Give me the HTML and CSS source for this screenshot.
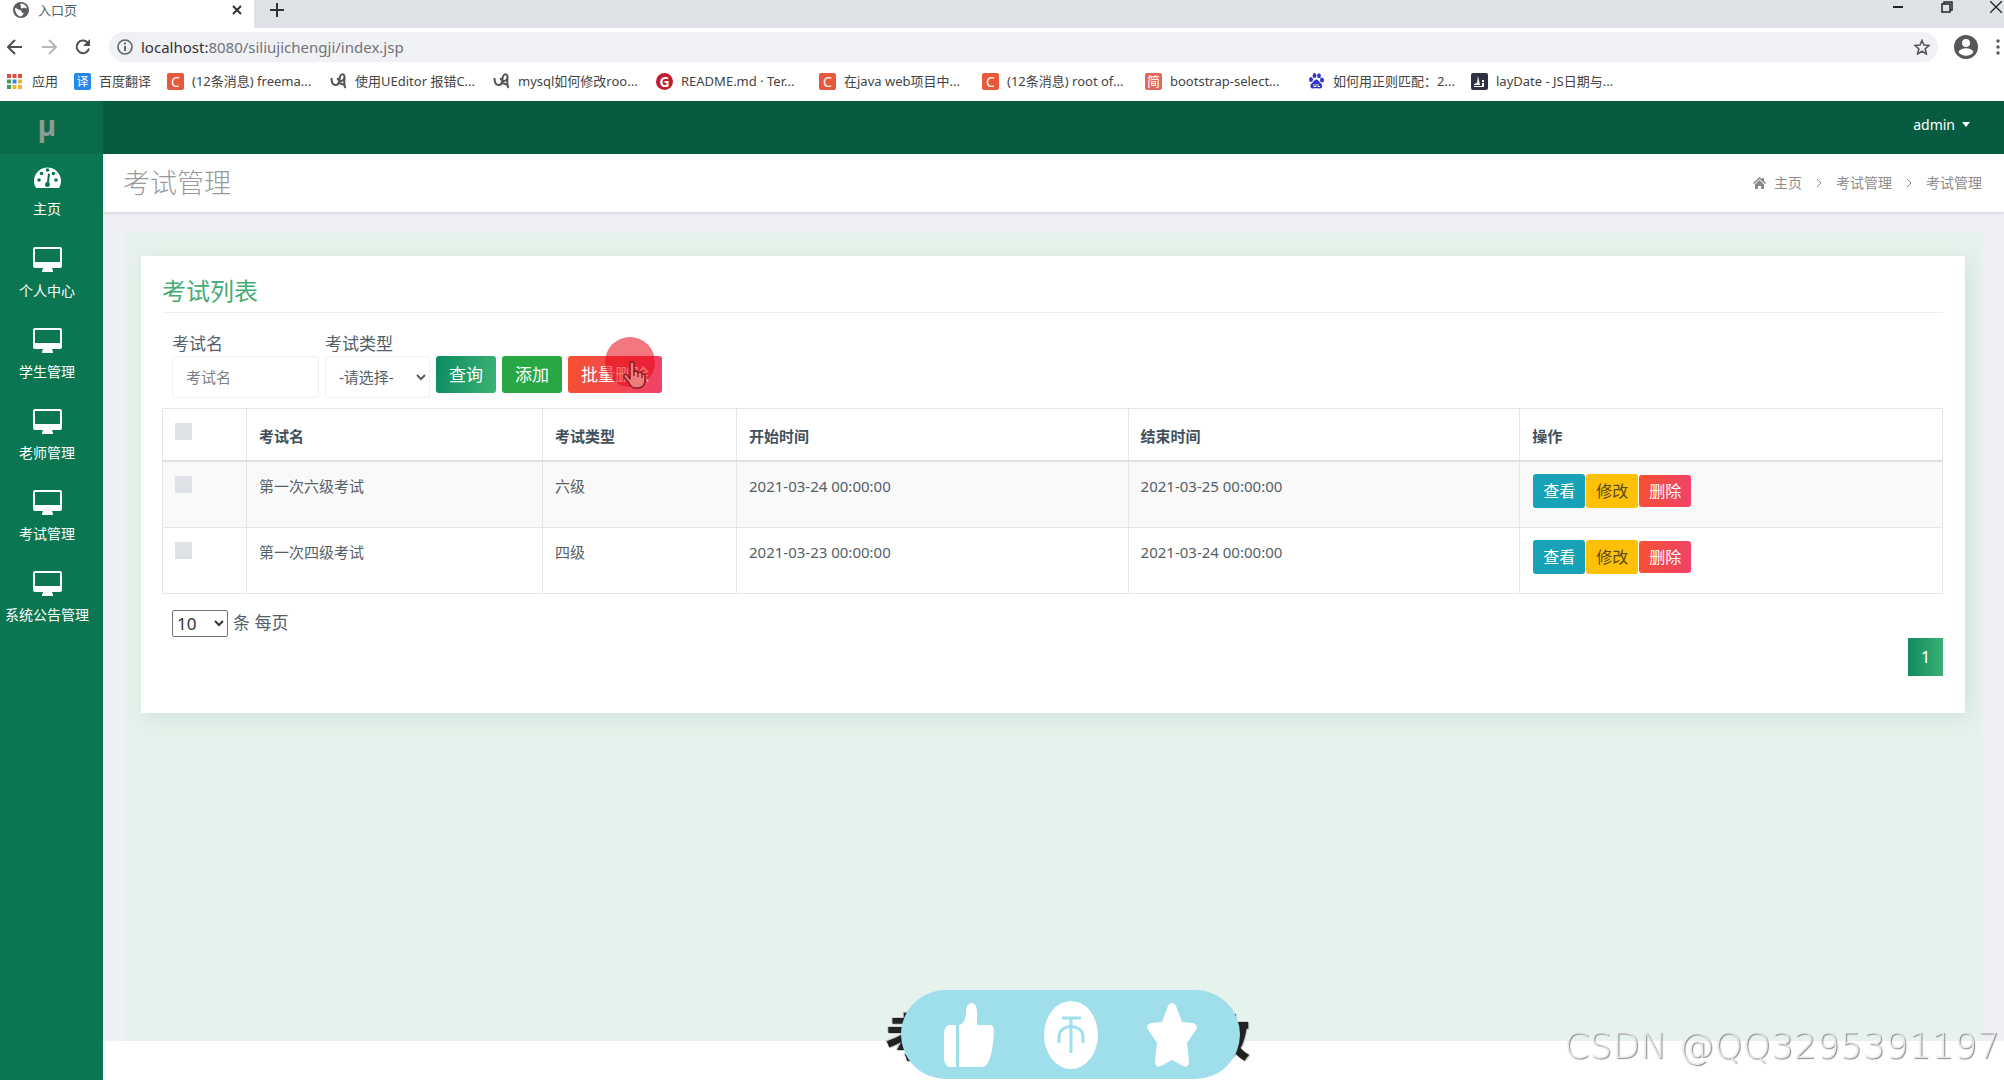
FILE: index.html
```html
<!DOCTYPE html>
<html lang="zh-CN">
<head>
<meta charset="utf-8">
<title>入口页</title>
<link rel="stylesheet" href="styles.css">
</head>
<body>
<svg class="defs" aria-hidden="true">
  <symbol id="monitor" viewBox="0 0 29 25"><path fill-rule="evenodd" d="M2 0h25a2 2 0 0 1 2 2v17a2 2 0 0 1-2 2h-8l1 3v1H9v-1l1-3H2a2 2 0 0 1-2-2V2a2 2 0 0 1 2-2zm0 2v13h25V2z"/></symbol>
  <symbol id="swirl" viewBox="0 0 16 16"><path fill="none" stroke="#555" stroke-width="2" d="M1 5c0 9 7 9 8 2 0-7 5-7 5-3 0 5-6 5-7 1M14 4c0 5-1 8 1 11M9 10l5 2"/></symbol>
</svg>

<header class="browser">
  <div class="tabs">
    <div class="tab">
      <svg width="16" height="16" viewBox="0 0 16 16"><circle cx="8" cy="8" r="8" fill="#5a5d61"/><path fill="#fff" d="M2 6c2 0 3 2 5 2s1 3 3 3-1 3-2 3.500C4 14 2 10 2 6zm5-4c3-1 6 1 7 4-2 1-3-1-4 0S7 6 8 4z"/></svg>
      <span class="tab-title">入口页</span>
      <button class="plain" aria-label="关闭标签"><svg width="10" height="10" viewBox="0 0 10 10"><path stroke="#333" stroke-width="2" d="M1 1l8 8M9 1L1 9"/></svg></button>
    </div>
    <button class="plain new-tab" aria-label="新标签"><svg width="14" height="14" viewBox="0 0 14 14"><path stroke="#333" stroke-width="2" d="M7 0v14M0 7h14"/></svg></button>
    <div class="window-buttons">
      <button class="plain" aria-label="最小化"><svg width="12" height="12" viewBox="0 0 12 12"><path stroke="#222" stroke-width="2" d="M1 6h10"/></svg></button>
      <button class="plain" aria-label="还原"><svg width="12" height="12" viewBox="0 0 12 12"><path fill="none" stroke="#222" stroke-width="1.500" d="M1 3h8v8H1zM3 3V1h8v8H9"/></svg></button>
      <button class="plain" aria-label="关闭"><svg width="12" height="12" viewBox="0 0 12 12"><path stroke="#222" stroke-width="1.300" d="M0 0l12 12M12 0L0 12"/></svg></button>
    </div>
  </div>
  <div class="toolbar">
    <button class="plain" aria-label="后退"><svg width="16" height="16" viewBox="0 0 16 16"><path fill="none" stroke="#4c4f53" stroke-width="2" d="M15 8H2M8 1L1 8l7 7"/></svg></button>
    <button class="plain" aria-label="前进"><svg width="16" height="16" viewBox="0 0 16 16"><path fill="none" stroke="#b5b7ba" stroke-width="2" d="M1 8h13M8 1l7 7-7 7"/></svg></button>
    <button class="plain" aria-label="刷新"><svg width="16" height="16" viewBox="0 0 16 16"><path fill="none" stroke="#4c4f53" stroke-width="2" d="M14 9.500A6.300 6.300 0 1 1 12.500 3.500L14 5"/><path fill="#4c4f53" d="M15 0v7H8z"/></svg></button>
    <div class="address">
      <svg width="16" height="16" viewBox="0 0 16 16"><circle cx="8" cy="8" r="7" fill="none" stroke="#5f6368" stroke-width="1.600"/><path stroke="#5f6368" stroke-width="2" d="M8 3.500v2M8 7v5"/></svg>
      <span class="url"><b>localhost:</b>8080/siliujichengji/index.jsp</span>
      <button class="plain" aria-label="收藏"><svg width="16" height="16" viewBox="0 0 16 16"><path fill="none" stroke="#555" stroke-width="1.600" d="M8 1.500l2 4.500 5 .5-3.800 3.200L12.300 15 8 12.200 3.700 15l1.100-5.300L1 6.500 6 6z"/></svg></button>
    </div>
    <button class="plain" aria-label="账户"><svg width="24" height="24" viewBox="0 0 24 24"><circle cx="12" cy="12" r="12" fill="#55575b"/><circle cx="12" cy="8" r="4" fill="#fff"/><path fill="#fff" d="M4.500 17c2-5 13-5 15 0-3 5-12 5-15 0z"/></svg></button>
    <button class="plain" aria-label="菜单"><svg width="4" height="16" viewBox="0 0 4 16"><g fill="#555"><circle cx="2" cy="2" r="1.700"/><circle cx="2" cy="8" r="1.700"/><circle cx="2" cy="14" r="1.700"/></g></svg></button>
  </div>
  <nav class="bookmarks">
    <a class="apps" href="#"><svg width="15" height="15" viewBox="0 0 15 15"><g fill="#d9503f"><path d="M0 0h4v4H0zM5.500 0h4v4h-4zM11 0h4v4h-4z"/></g><path fill="#3f9b58" d="M0 5.500h4v4H0z"/><path fill="#3f7fe0" d="M5.500 5.500h4v4h-4z"/><path fill="#e9b52d" d="M11 5.500h4v4h-4zM5.500 11h4v4h-4zM11 11h4v4h-4z"/><path fill="#3f9b58" d="M0 11h4v4H0z"/></svg>应用</a>
    <a class="translate" href="#"><span class="fav blue">译</span>百度翻译</a>
    <a href="#"><span class="fav orange">C</span>(12条消息) freema...</a>
    <a href="#"><svg width="17" height="16"><use href="#swirl"/></svg>使用UEditor 报错C...</a>
    <a href="#"><svg width="17" height="16"><use href="#swirl"/></svg>mysql如何修改roo...</a>
    <a href="#"><span class="fav round">G</span>README.md · Ter...</a>
    <a href="#"><span class="fav orange">C</span>在java web项目中...</a>
    <a href="#"><span class="fav orange">C</span>(12条消息) root of...</a>
    <a href="#"><span class="fav jian">简</span>bootstrap-select...</a>
    <a href="#"><svg width="17" height="16" viewBox="0 0 17 16"><g fill="#3337c9"><ellipse cx="3" cy="6.500" rx="2" ry="2.500"/><ellipse cx="6.500" cy="2.600" rx="1.900" ry="2.500"/><ellipse cx="11" cy="2.800" rx="1.900" ry="2.500"/><ellipse cx="14" cy="7" rx="2" ry="2.500"/><path d="M8.500 6.500c2 0 2.500 2.500 4.500 4s1.500 5-1 5-5-.5-7 0-4-3-1.500-5 3-4 5-4z"/></g><path stroke="#fff" d="M6 11v2.500h2V11M10 11v2.500h2"/></svg>如何用正则匹配：2...</a>
    <a href="#"><svg width="17" height="17" viewBox="0 0 17 17"><rect width="17" height="17" rx="2" fill="#2d3140"/><path fill="#fff" d="M7 3l2 9H3v-1l3-1zM11 7h2v2h-2zM11 10h2v4H3v-1h8z"/></svg>layDate - JS日期与...</a>
  </nav>
</header>

<div class="app">
  <aside class="sidebar">
    <a class="logo" href="#">µ</a>
    <nav class="menu">
      <a href="#"><svg width="27" height="25" viewBox="0 0 27 25"><path d="M2 23a13.500 13.500 0 1 1 23 0z"/><g fill="#0b7652"><circle cx="5" cy="15" r="1.800"/><circle cx="7.500" cy="8.500" r="1.800"/><circle cx="13.500" cy="5" r="1.800"/><circle cx="19.500" cy="8.500" r="1.800"/><circle cx="22" cy="15" r="1.800"/><path d="M14 8.500l2 .5-1 8.500a2.500 2.500 0 1 1-2-.5z"/></g></svg>主页</a>
      <a href="#"><svg width="29" height="25"><use href="#monitor"/></svg>个人中心</a>
      <a href="#"><svg width="29" height="25"><use href="#monitor"/></svg>学生管理</a>
      <a href="#"><svg width="29" height="25"><use href="#monitor"/></svg>老师管理</a>
      <a href="#"><svg width="29" height="25"><use href="#monitor"/></svg>考试管理</a>
      <a href="#"><svg width="29" height="25"><use href="#monitor"/></svg>系统公告管理</a>
    </nav>
  </aside>
  <div class="content">
    <div class="topbar"><button class="plain user">admin<span class="caret"></span></button></div>
    <div class="page-head">
      <h1>考试管理</h1>
      <nav class="crumbs">
        <a href="#"><svg width="13" height="12" viewBox="0 0 13 12"><path fill="#888" d="M6.500 0L9 2.300V1h2v3l2 2-1 1-5.500-5L1 7 0 6zM6.500 3L11 7.500V12H8V9H5v3H2V7.500z"/></svg>主页</a>
        <svg width="6" height="8" viewBox="0 0 6 8"><path fill="none" stroke="#888" d="M1 0l4 4-4 4"/></svg>
        <a href="#">考试管理</a>
        <svg width="6" height="8" viewBox="0 0 6 8"><path fill="none" stroke="#888" d="M1 0l4 4-4 4"/></svg>
        <span>考试管理</span>
      </nav>
    </div>
    <main class="stage">
      <section class="card">
        <h2>考试列表</h2>
        <form class="filters">
          <div class="field"><label for="name">考试名</label><input id="name" type="text" placeholder="考试名"></div>
          <div class="field"><label for="type">考试类型</label><select id="type"><option>-请选择-</option></select></div>
          <div class="actions">
            <button class="btn search" type="button">查询</button>
            <button class="btn add" type="button">添加</button>
            <span class="pointer-host">
              <button class="btn danger" type="button">批量删除</button>
              <span class="click-mark"></span>
              <svg class="hand" width="24" height="28" viewBox="0 0 24 28"><path fill="#ef7c7c" stroke="#8d1a22" stroke-width="1.500" stroke-linejoin="round" d="M8 18V3c0-3 4-3 4 0v8c1-2 4-1 4 1 1-2 4-1 4 1 1-1 3 0 3 2v5c0 4-3 7-7 7h-3c-3 0-5-3-6-5l-5-6c-1-3 2-4 4-1z"/><path stroke="#8d1a22" stroke-width="1.300" d="M12 10v5M16 12v4M20 13v4"/></svg>
            </span>
          </div>
        </form>
        <table>
          <colgroup><col class="c-check"><col class="c-name"><col class="c-type"><col class="c-time"><col class="c-time"><col></colgroup>
          <thead>
            <tr><th><input type="checkbox" aria-label="全选"></th><th>考试名</th><th>考试类型</th><th>开始时间</th><th>结束时间</th><th>操作</th></tr>
          </thead>
          <tbody>
            <tr><td><input type="checkbox" aria-label="第一次六级考试"></td><td>第一次六级考试</td><td>六级</td><td>2021-03-24 00:00:00</td><td>2021-03-25 00:00:00</td><td><div class="ops"><button class="btn view">查看</button><button class="btn edit">修改</button><button class="btn danger">删除</button></div></td></tr>
            <tr><td><input type="checkbox" aria-label="第一次四级考试"></td><td>第一次四级考试</td><td>四级</td><td>2021-03-23 00:00:00</td><td>2021-03-24 00:00:00</td><td><div class="ops"><button class="btn view">查看</button><button class="btn edit">修改</button><button class="btn danger">删除</button></div></td></tr>
          </tbody>
        </table>
        <div class="page-size"><select id="size"><option>10</option></select><label for="size">条 每页</label></div>
        <div class="pager"><button class="page-no">1</button></div>
      </section>
    </main>
  </div>
</div>

<div class="reactions">
  <div class="caption"><span>考</span><span>改</span></div>
  <div class="pill">
    <svg width="50" height="64" viewBox="0 0 50 64"><path fill="#fff" d="M6 22h6v42H6c-4 0-6-5-6-9V31c0-5 2-9 6-9zM15 64V22c5-1 6-5 7-12C22-3 33-3 33 9v13h13c3 0 4 3 4 7-1 13-3 35-12 35z"/></svg>
    <svg width="54" height="68" viewBox="0 0 54 68"><ellipse cx="27" cy="34" rx="27" ry="34" fill="#fff"/><path fill="none" stroke="#9fdeeb" stroke-width="3" d="M18 17h19M27 17v35M15 42V36c0-14 24-14 24 0v6"/></svg>
    <svg width="50" height="64" viewBox="0 0 50 64"><path fill="#fff" d="M21 3c2-4 6-4 8 0l6 16 11 1c4 1 5 5 2 8l-8 12 2 19c0 4-3 6-6 4l-11-6-11 6c-3 2-6 0-6-4l2-19L2 28c-3-3-2-7 2-8l11-1z"/></svg>
  </div>
</div>
<div class="watermark">CSDN @QQ3295391197</div>
</body>
</html>
```
FILE: styles.css
```css
* { box-sizing: border-box; }
body {
  margin: 0;
  min-height: 100vh;
  display: flex;
  flex-direction: column;
  background: #fff;
  color: #555f68;
  font: 15px/24px "Noto Sans", "Noto Sans CJK SC", sans-serif;
}
a { color: inherit; text-decoration: none; }
button, input, select { font: inherit; color: inherit; }
svg { display: block; flex: none; }
.defs { position: absolute; width: 0; height: 0; }
.plain { display: flex; align-items: center; padding: 0; border: 0; background: none; }

/* browser window */
.tabs { display: flex; height: 28px; background: #dee1e6; }
.tab {
  display: flex;
  align-items: center;
  width: 254px;
  padding: 0 12px 8px 13px;
  background: #fff;
  font-size: 13px;
  line-height: 20px;
}
.tab-title { flex: 1; padding-left: 9px; }
.new-tab { margin: 0 0 8px 16px; }
.window-buttons { display: flex; gap: 37px; margin: 0 2px 14px auto; }
.toolbar { display: flex; align-items: center; gap: 18px; height: 37px; padding: 0 4px 0 7px; }
.address {
  display: flex;
  flex: 1;
  align-items: center;
  gap: 8px;
  height: 30px;
  padding: 0 8px;
  border-radius: 15px;
  background: #f0f1f4;
}
.url { flex: 1; color: #707377; font-size: 15px; }
.url b { color: #303235; font-weight: 400; }
.address + .plain { margin-left: -2px; }
.bookmarks { display: flex; height: 36px; padding: 1px 0 0 7px; color: #444; font-size: 13px; }
.bookmarks a { display: flex; align-items: center; gap: 8px; flex: 0 0 163px; height: 30px; white-space: nowrap; }
.bookmarks .apps { flex-basis: 67px; gap: 10px; font-size: 13px; }
.bookmarks .translate { flex-basis: 93px; }
.fav { width: 17px; height: 17px; border-radius: 2px; color: #fff; font-size: 14px; line-height: 17px; text-align: center; }
.blue { background: #2688e8; font-size: 12px; }
.orange { background: #e8593b; }
.round { border-radius: 50%; background: #c01d30; font-weight: 700; }
.jian { background: #e2695c; font-size: 13px; }

/* application frame */
.app { display: flex; flex: 1; }
.sidebar { flex: 0 0 103px; background: #0b7652; color: #fff; }
.logo {
  display: block;
  height: 53px;
  padding-right: 9px;
  background: #0a6b4b;
  color: #8c9c94;
  font-size: 28px;
  font-weight: 700;
  line-height: 49px;
  text-align: center;
}
.menu { display: flex; flex-direction: column; padding: 11px 9px 0 0; font-size: 14px; }
.menu a { display: flex; flex-direction: column; align-items: center; gap: 7px; height: 81px; white-space: nowrap; }
.menu svg { fill: #fff; }
.menu a + a { padding-top: 1px; }
.content { display: flex; flex: 1; flex-direction: column; padding-bottom: 39px; }
.topbar { display: flex; justify-content: flex-end; height: 53px; padding: 0 34px 6px 0; background: #065b41; }
.user { gap: 7px; color: #fff; font-size: 14px; }
.caret { border: 4px solid transparent; border-top: 5px solid #fff; border-bottom: 0; }
.page-head {
  z-index: 1;
  display: flex;
  align-items: center;
  justify-content: space-between;
  height: 58px;
  padding: 0 22px 0 20px;
  background: #fff;
  box-shadow: 0 1px 3px rgba(0, 0, 0, .15);
  color: #8c8c8c;
}
h1 { margin: 0; color: #999; font-size: 27px; font-weight: 300; }
.crumbs { display: flex; align-items: center; gap: 14px; font-size: 14px; }
.crumbs a { display: flex; align-items: center; gap: 8px; }
.stage { flex: 1; padding: 24px 17px 24px 16px; border: solid #eff0f5; border-width: 20px 22px 0; background: #e6f3ec; }
.card { padding: 20px 22px 37px 21px; background: #fff; box-shadow: 4px 5px 20px rgba(60, 110, 100, .12); }
h2 { margin: 0; padding-bottom: 6px; border-bottom: 1px solid #eee; color: #45ac74; font-size: 24px; font-weight: 400; line-height: 30px; }

/* filters */
.filters { display: flex; align-items: flex-end; gap: 6px; padding: 19px 0 10px 10px; }
.field { display: flex; flex-direction: column; font-size: 17px; }
.field input, .field select { height: 42px; border: 1px solid #f0f1f3; border-radius: 3px; background: #fff; font-size: 15px; }
.field input { width: 147px; padding: 0 13px; }
.field select { width: 105px; padding: 0 0 0 9px; }
.field input::placeholder { color: #7b8086; opacity: 1; }
.actions { display: flex; align-items: center; gap: 6px; padding-bottom: 5px; }
.btn { display: block; padding: 0 9px; border: 0; border-radius: 3px; color: #fff; font-size: 16px; line-height: 34px; }
.actions .btn { padding: 0 13px; font-size: 17px; line-height: 37px; }
.search { background: linear-gradient(100deg, #0c8a62, #3cb373); }
.add { background: #28a745; }
.danger { background: linear-gradient(100deg, #f5502f, #ef426b); }
.view { background: #17a2b8; }
.edit { background: #ffc107; color: #5b4a1c; }
.pointer-host { position: relative; }
.click-mark { position: absolute; top: -19px; left: 37px; width: 50px; height: 50px; border-radius: 50%; background: rgba(232, 8, 20, .55); }
.hand { position: absolute; top: 5px; left: 54px; }

/* table */
table { width: 100%; border-collapse: collapse; table-layout: fixed; }
.c-check { width: 84px; }
.c-name { width: 296px; }
.c-type { width: 194px; }
.c-time { width: 22%; }
th, td { height: 66px; padding: 12px; border: 1px solid #e3e5e8; text-align: left; vertical-align: top; }
th { height: 52px; padding-top: 15px; border-bottom: 2px solid #dee0e2; color: #43505c; font-weight: 700; }
th:first-child { padding-top: 12px; }
tbody tr:first-child { background: #f9f9fa; }
input[type="checkbox"] { display: block; width: 17px; height: 17px; margin: 2px 0; appearance: none; background: #dee2e6; }
.ops { display: flex; align-items: center; gap: 1px; padding-left: 1px; }
.ops .btn { padding: 0 10px; }
.ops .danger { line-height: 32px; }
.page-size { display: flex; align-items: center; gap: 5px; padding: 16px 0 1px 10px; font-size: 17px; line-height: 26px; }
.page-size select { width: 56px; height: 27px; padding: 0; border: 1px solid #767676; border-radius: 2px; background: #fff; color: #333; }
.pager { display: flex; justify-content: flex-end; }
.page-no { width: 35px; height: 38px; padding: 0; border: 0; background: linear-gradient(90deg, #128c60, #3bb074); color: #fff; font-size: 17px; }

/* overlays */
.reactions { position: fixed; bottom: 1px; left: calc(50% - 101px); width: 339px; }
.pill { position: relative; display: flex; align-items: center; justify-content: space-between; height: 89px; padding: 0 43px; border-radius: 45px; background: #9fdeeb; }
.caption { position: absolute; top: 19px; right: -10px; left: -16px; display: flex; justify-content: space-between; color: #222; font-size: 50px; font-weight: 900; line-height: 56px; text-shadow: -1px -1px #ccc, 1px 1px #ccc; }
.watermark {
  position: fixed;
  right: 4px;
  bottom: 12px;
  color: rgba(235, 238, 237, .9);
  font: 200 36px/44px "DejaVu Sans Light", "DejaVu Sans ExtraLight", "DejaVu Sans", sans-serif;
  text-shadow: 1px 1px 1px #888;
}
```
